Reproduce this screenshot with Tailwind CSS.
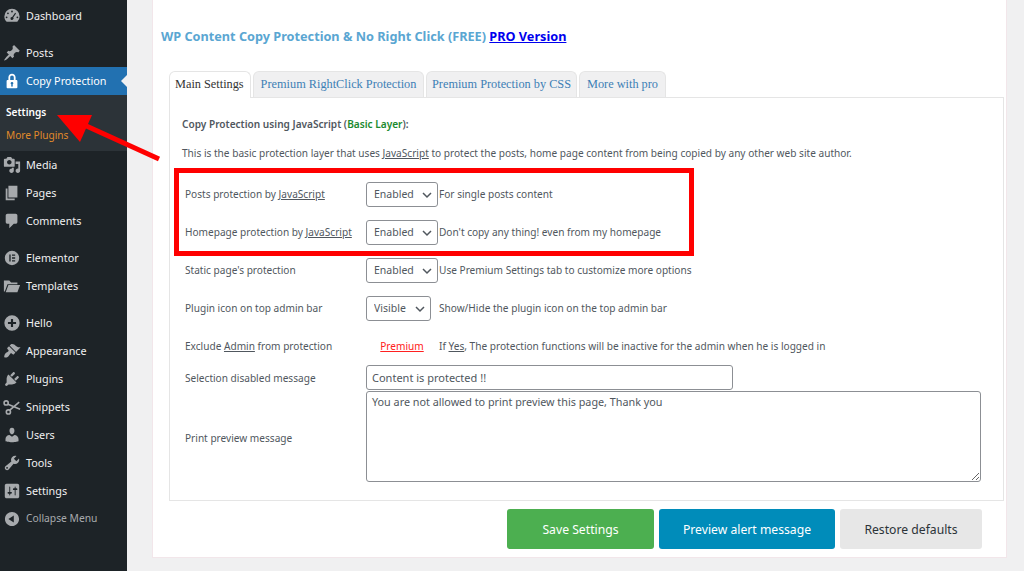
<!DOCTYPE html>
<html lang="en">
<head>
<meta charset="UTF-8">
<title>Copy Protection</title>
<script src="https://cdn.jsdelivr.net/npm/@tailwindcss/browser@4"></script>
</head>
<body class="bg-[#f0f0f1] font-['Noto_Sans',sans-serif] overflow-hidden">
<div class="relative flex w-[1024px] h-[571px] overflow-hidden">

  <!-- admin menu -->
  <nav class="w-[127px] h-full shrink-0 bg-[#1d2327] pt-[2px] text-[10.8px] text-[#f0f0f1]">
    <a class="flex items-center h-7 pl-[3px] gap-[5px]"><svg class="w-[18px] h-[18px] fill-[#a7aaad]" viewBox="0 0 20 20"><path fill-rule="evenodd" d="M10 2a8.500 8.500 0 0 0-8.500 8.500c0 2.400 1 4.500 2.600 6h11.800a8.500 8.500 0 0 0 2.600-6A8.500 8.500 0 0 0 10 2zm0 2a1 1 0 1 1 0 2 1 1 0 0 1 0-2zM5.500 6a1 1 0 1 1 0 2 1 1 0 0 1 0-2zm8 .5l1 .6-3.100 4.600a1.700 1.700 0 1 1-1.200-.7zM4 10.500a1 1 0 1 1 0 2 1 1 0 0 1 0-2zm12 0a1 1 0 1 1 0 2 1 1 0 0 1 0-2z"/></svg>Dashboard</a>
    <a class="flex items-center h-7 pl-[3px] gap-[5px] mt-[9px]"><svg class="w-[18px] h-[18px] fill-[#a7aaad]" viewBox="0 0 20 20"><path d="M10.440 3.020l1.820-1.820 6.360 6.350-1.830 1.820c-1.050-.68-2.480-.57-3.410.36l-.75.750c-.92.930-1.040 2.350-.35 3.410l-1.830 1.820-2.410-2.410-2.800 2.790c-.42.420-3.380 2.710-3.800 2.290s1.860-3.390 2.280-3.810l2.790-2.790L4.100 9.360l1.830-1.820c1.050.690 2.480.570 3.400-.36l.750-.750c.930-.920 1.050-2.350.360-3.410z"/></svg>Posts</a>
    <a class="relative flex items-center h-7 pl-[3px] gap-[5px] bg-[#2271b1] text-white"><svg class="w-[18px] h-[18px] fill-white" viewBox="0 0 20 20"><path d="M14 9h1c.550 0 1 .450 1 1v7c0 .550-.450 1-1 1H5c-.550 0-1-.450-1-1v-7c0-.550.450-1 1-1h1V6c0-2.210 1.790-4 4-4s4 1.790 4 4v3zm-2 0V6c0-1.100-.900-2-2-2s-2 .900-2 2v3h4zm-1 7l-.360-2.150c.510-.240.860-.750.860-1.350 0-.830-.670-1.500-1.500-1.500s-1.500.670-1.500 1.500c0 .600.350 1.110.860 1.350L9 16h2z"/></svg>Copy Protection<span class="absolute right-0 top-[8px] border-y-[6px] border-r-[6px] border-y-transparent border-r-[#f0f0f1]"></span></a>
    <div class="h-14 bg-[#2c3338] pt-[8px] pl-[6px] text-[10.1px]">
      <div class="h-[23px] leading-[18px] font-semibold text-white">Settings</div>
      <div class="h-[23px] leading-[18px] text-[#e08a2a]">More Plugins</div>
    </div>
    <a class="flex items-center h-7 pl-[3px] gap-[5px]"><svg class="w-[18px] h-[18px] fill-[#a7aaad]" viewBox="0 0 20 20"><path d="M13 11V4c0-.550-.450-1-1-1h-1.670L9 1H5L3.670 3H2c-.550 0-1 .450-1 1v7c0 .550.450 1 1 1h10c.550 0 1-.450 1-1zM7 4.500c1.380 0 2.500 1.120 2.500 2.500S8.380 9.500 7 9.500 4.500 8.380 4.500 7 5.620 4.500 7 4.500zM14 6h5v10.500c0 1.380-1.120 2.500-2.500 2.500S14 17.880 14 16.500s1.120-2.500 2.500-2.500c.170 0 .340.020.500.050V9h-3V6zm-4 8.050V13h2v3.500c0 1.380-1.120 2.500-2.500 2.500S7 17.880 7 16.500 8.120 14 9.500 14c.170 0 .340.020.500.050z"/></svg>Media</a>
    <a class="flex items-center h-7 pl-[3px] gap-[5px]"><svg class="w-[18px] h-[18px] fill-[#a7aaad]" viewBox="0 0 20 20"><path d="M6 15V2h10v13H6zm-1 1h8v2H3V5h2v11z"/></svg>Pages</a>
    <a class="flex items-center h-7 pl-[3px] gap-[5px]"><svg class="w-[18px] h-[18px] fill-[#a7aaad]" viewBox="0 0 20 20"><path d="M5 2h9c1.100 0 2 .900 2 2v7c0 1.100-.900 2-2 2h-2l-5 5v-5H5c-1.100 0-2-.900-2-2V4c0-1.100.900-2 2-2z"/></svg>Comments</a>
    <a class="flex items-center h-7 pl-[3px] gap-[5px] mt-[9px]"><svg class="w-[18px] h-[18px] fill-[#a7aaad]" viewBox="0 0 20 20"><path fill-rule="evenodd" d="M10 2a8 8 0 1 0 0 16 8 8 0 0 0 0-16zM7 6h1.500v8H7zm3 0h3.500v1.500H10zm0 3.200h3.500v1.500H10zm0 3.300h3.500V14H10z"/></svg>Elementor</a>
    <a class="flex items-center h-7 pl-[3px] gap-[5px]"><svg class="w-[18px] h-[18px] fill-[#a7aaad]" viewBox="0 0 20 20"><path d="M1 4h6l2 2h7v2H5l-3 8H1zm5 5h13l-3 8H3z"/></svg>Templates</a>
    <a class="flex items-center h-7 pl-[3px] gap-[5px] mt-[9px]"><svg class="w-[18px] h-[18px] fill-[#a7aaad]" viewBox="0 0 20 20"><path fill-rule="evenodd" d="M10 1.500a8.500 8.500 0 1 0 0 17 8.500 8.500 0 0 0 0-17zM8.800 5.500h2.400v3.300h3.300v2.400h-3.300v3.300H8.800v-3.300H5.500V8.800h3.300z"/></svg>Hello</a>
    <a class="flex items-center h-7 pl-[3px] gap-[5px]"><svg class="w-[18px] h-[18px] fill-[#a7aaad]" viewBox="0 0 20 20"><path d="M14.480 11.060L7.410 3.990l1.500-1.500c.500-.560 2.300-.470 3.510.320 1.210.800 1.430 1.280 2.910 2.100 1.180.640 2.450 1.260 4.230.910zm-.710.710L6.700 4.700 4.930 6.470c-.390.390-.390 1.020 0 1.410l1.060 1.060c.390.390.390 1.030 0 1.420-.600.600-1.400 1-2.120 1.420-.700.400-1.400 1-1.800 1.700-.400.700-1.100 3-.500 3.600s2.900-.100 3.600-.500c.700-.400 1.300-1.100 1.700-1.800.420-.720.820-1.520 1.420-2.120.390-.390 1.030-.390 1.420 0l1.060 1.060c.390.390 1.020.390 1.410 0z"/></svg>Appearance</a>
    <a class="flex items-center h-7 pl-[3px] gap-[5px]"><svg class="w-[18px] h-[18px] fill-[#a7aaad]" viewBox="0 0 20 20"><path d="M13.110 4.360L9.870 7.600 8 5.730l3.240-3.240c.350-.340 1.050-.200 1.560.320.520.510.660 1.210.310 1.550zm-8 1.770l.910-1.120 9.010 9.010-1.190.840c-.710.710-2.630 1.160-3.820 1.160H6.140L4.900 17.260c-.590.590-1.540.590-2.120 0-.590-.580-.590-1.530 0-2.120l1.240-1.240v-3.880c0-1.130.520-3.130 1.090-3.890zm7.260 3.970l3.240-3.240c.340-.350 1.040-.210 1.550.310.520.510.660 1.210.310 1.550l-3.240 3.250z"/></svg>Plugins</a>
    <a class="flex items-center h-7 pl-[3px] gap-[5px]"><svg class="w-[18px] h-[18px] fill-none stroke-[#a7aaad] stroke-[1.8]" viewBox="0 0 20 20"><circle cx="3.500" cy="5.500" r="2.300"/><circle cx="6" cy="15.500" r="2.300"/><path d="M5.500 7l13.500 5.500M7.500 13.500L18 4.500"/></svg>Snippets</a>
    <a class="flex items-center h-7 pl-[3px] gap-[5px]"><svg class="w-[18px] h-[18px] fill-[#a7aaad]" viewBox="0 0 20 20"><path d="M10 9.250c-2.270 0-2.730-3.440-2.730-3.440C7 4.020 7.820 2 9.970 2c2.160 0 2.980 2.020 2.710 3.810 0 0-.410 3.440-2.680 3.440zm0 2.570L12.720 10c2.390 0 4.520 2.330 4.520 4.530v2.490s-3.650 1.130-7.240 1.130c-3.650 0-7.240-1.130-7.240-1.130v-2.490c0-2.250 1.940-4.480 4.470-4.480z"/></svg>Users</a>
    <a class="flex items-center h-7 pl-[3px] gap-[5px]"><svg class="w-[18px] h-[18px] fill-[#a7aaad]" viewBox="0 0 20 20"><path d="M16.680 9.770c-1.340 1.340-3.300 1.670-4.950.990l-5.410 6.520c-.990.990-2.590.990-3.570 0-.990-.980-.990-2.580 0-3.570l6.520-5.420c-.680-1.650-.350-3.610.990-4.950 1.280-1.280 3.120-1.620 4.720-1.060l-2.890 2.890 2.820 2.820 2.860-2.860c.530 1.580.180 3.390-1.090 4.640zM3.810 16.210c.400.390 1.030.390 1.420 0 .400-.400.400-1.030 0-1.430-.390-.390-1.020-.390-1.420 0-.390.400-.390 1.030 0 1.430z"/></svg>Tools</a>
    <a class="flex items-center h-7 pl-[3px] gap-[5px]"><svg class="w-[18px] h-[18px] fill-[#a7aaad]" viewBox="0 0 20 20"><path d="M18 16V4c0-1.100-.900-2-2-2H4c-1.100 0-2 .900-2 2v12c0 1.100.900 2 2 2h12c1.100 0 2-.900 2-2zM8 11h1c.550 0 1 .450 1 1s-.450 1-1 1H8v1.500c0 .280-.220.500-.500.500s-.500-.220-.500-.500V13H6c-.550 0-1-.450-1-1s.450-1 1-1h1V5.500c0-.280.220-.500.500-.500s.500.220.500.500V11zm5-2h-1c-.550 0-1-.450-1-1s.450-1 1-1h1V5.500c0-.280.220-.500.500-.500s.500.220.500.500V7h1c.550 0 1 .450 1 1s-.450 1-1 1h-1v5.500c0 .280-.220.500-.500.500s-.500-.220-.500-.500V9z"/></svg>Settings</a>
    <a class="flex items-center h-7 pl-[3px] gap-[5px] text-[10.3px] text-[#a7aaad]"><svg class="w-[18px] h-[18px] fill-[#a7aaad]" viewBox="0 0 20 20"><path d="M10 2.160c4.330 0 7.840 3.510 7.840 7.840s-3.510 7.840-7.840 7.840S2.160 14.330 2.160 10 5.670 2.160 10 2.160zm2 11.840V6l-6 4z"/></svg>Collapse Menu</a>
  </nav>

  <!-- plugin page -->
  <main class="ml-[25px] w-[855px] h-[558px] bg-white border border-[#f2e6ea] border-t-0 pl-2 text-[10.1px] text-[#50575e]">
    <h1 class="h-[71px] pt-[27px] leading-[18px] text-[12.7px] font-bold text-[#5aa6d2]">WP Content Copy Protection &amp; No Right Click (FREE) <a class="text-[#0000ee] underline">PRO Version</a></h1>

    <div class="flex gap-[2px] ml-2 h-[27px] font-['Liberation_Serif',serif] text-[12.3px]">
      <div class="relative z-10 h-[27px] px-[5px] w-[82px] leading-[24px] whitespace-nowrap bg-white border border-[#e5e5e5] border-b-0 rounded-t-md text-[#333]">Main Settings</div>
      <div class="h-[26px] w-[171px] text-center leading-[24px] whitespace-nowrap bg-[#f0f0f1] border border-[#e5e5e5] border-b-0 rounded-t-md text-[#3d7fb5]">Premium RightClick Protection</div>
      <div class="h-[26px] w-[151px] text-center leading-[24px] whitespace-nowrap bg-[#f0f0f1] border border-[#e5e5e5] border-b-0 rounded-t-md text-[#3d7fb5]">Premium Protection by CSS</div>
      <div class="h-[26px] w-[87px] text-center leading-[24px] whitespace-nowrap bg-[#f0f0f1] border border-[#e5e5e5] border-b-0 rounded-t-md text-[#3d7fb5]">More with pro</div>
    </div>

    <section class="ml-2 -mt-px w-[835px] h-[404px] border border-[#e5e5e5] pl-[12px] pt-[19px]">
      <p class="h-[29px] leading-[14px] font-semibold">Copy Protection using JavaScript (<span class="text-[#1a8a2e]">Basic Layer</span>):</p>
      <p class="h-[19px] leading-[14px] whitespace-nowrap">This is the basic protection layer that uses <u>JavaScript</u> to protect the posts, home page content from being copied by any other web site author.</p>

      <div class="grid grid-cols-[181px_1fr] pl-[3px] mt-[10px] auto-rows-[38px] items-center">
        <div class="pt-px">Posts protection by <u>JavaScript</u></div>
        <div class="flex items-center">
          <div class="relative w-[72px] mr-px"><select class="appearance-none w-full h-[25px] pl-[7px] pt-[2px] border border-[#8c8f94] rounded-[3px] bg-white text-[10.5px] text-[#50575e]"><option>Enabled</option></select><svg class="absolute right-[6px] top-[9px] w-[10px] h-[8px] fill-none stroke-[#50575e] stroke-[1.5]" viewBox="0 0 10 8"><path d="M1 2l4 4 4-4"/></svg></div>
          <span class="pt-[2px]">For single posts content</span>
        </div>
        <div class="pt-px">Homepage protection by <u>JavaScript</u></div>
        <div class="flex items-center">
          <div class="relative w-[72px] mr-px"><select class="appearance-none w-full h-[25px] pl-[7px] pt-[2px] border border-[#8c8f94] rounded-[3px] bg-white text-[10.5px] text-[#50575e]"><option>Enabled</option></select><svg class="absolute right-[6px] top-[9px] w-[10px] h-[8px] fill-none stroke-[#50575e] stroke-[1.5]" viewBox="0 0 10 8"><path d="M1 2l4 4 4-4"/></svg></div>
          <span class="pt-[2px]">Don't copy any thing! even from my homepage</span>
        </div>
        <div class="pt-px">Static page's protection</div>
        <div class="flex items-center">
          <div class="relative w-[72px] mr-px"><select class="appearance-none w-full h-[25px] pl-[7px] pt-[2px] border border-[#8c8f94] rounded-[3px] bg-white text-[10.5px] text-[#50575e]"><option>Enabled</option></select><svg class="absolute right-[6px] top-[9px] w-[10px] h-[8px] fill-none stroke-[#50575e] stroke-[1.5]" viewBox="0 0 10 8"><path d="M1 2l4 4 4-4"/></svg></div>
          <span class="pt-[2px]">Use Premium Settings tab to customize more options</span>
        </div>
        <div class="pt-px">Plugin icon on top admin bar</div>
        <div class="flex items-center">
          <div class="relative w-[65px] mr-[8px]"><select class="appearance-none w-full h-[25px] pl-[7px] pt-[2px] border border-[#8c8f94] rounded-[3px] bg-white text-[10.5px] text-[#50575e]"><option>Visible</option></select><svg class="absolute right-[6px] top-[9px] w-[10px] h-[8px] fill-none stroke-[#50575e] stroke-[1.5]" viewBox="0 0 10 8"><path d="M1 2l4 4 4-4"/></svg></div>
          <span class="pt-[2px]">Show/Hide the plugin icon on the top admin bar</span>
        </div>
        <div class="pt-px">Exclude <u>Admin</u> from protection</div>
        <div class="flex items-center">
          <u class="w-[72px] mr-px pt-[2px] text-center text-[#ff2020]">Premium</u>
          <span class="pt-[2px]">If <u>Yes</u>, The protection functions will be inactive for the admin when he is logged in</span>
        </div>
      </div>

      <div class="grid grid-cols-[181px_1fr] pl-[3px] -mt-px items-center">
        <div class="h-[26px] leading-[28px]">Selection disabled message</div>
        <input class="w-[367px] h-[25px] pl-[5px] border border-[#8c8f94] rounded-[3px] text-[11px] text-[#50575e]" value="Content is protected !!">
        <div class="pt-[6px]">Print preview message</div>
        <textarea class="w-[615px] h-[91px] mt-px px-[5px] py-0 border border-[#8c8f94] rounded-[3px] leading-[20px] text-[10.8px] text-[#50575e]">You are not allowed to print preview this page, Thank you</textarea>
      </div>
    </section>

    <div class="flex gap-[5px] ml-[346px] mt-[8px] text-[12.2px]">
      <button class="w-[147px] h-10 pt-[2px] rounded-[3px] bg-[#4caf50] text-white">Save Settings</button>
      <button class="w-[176px] h-10 pt-[2px] rounded-[3px] bg-[#008cba] text-white">Preview alert message</button>
      <button class="w-[142px] h-10 pt-[2px] rounded-[3px] bg-[#e7e7e7] text-[#2c3338]">Restore defaults</button>
    </div>
  </main>

  <!-- red annotation -->
  <div class="absolute left-[174px] top-[168px] w-[520px] h-[88px] border-[5px] border-[#ff0000]"></div>
  <svg class="absolute left-0 top-0 pointer-events-none" width="200" height="200" viewBox="0 0 200 200"><path d="M159 159L82 124" stroke="#ff0000" stroke-width="5" fill="none"/><path d="M57 115H92L80 142z" fill="#ff0000"/></svg>
</div>
</body>
</html>
